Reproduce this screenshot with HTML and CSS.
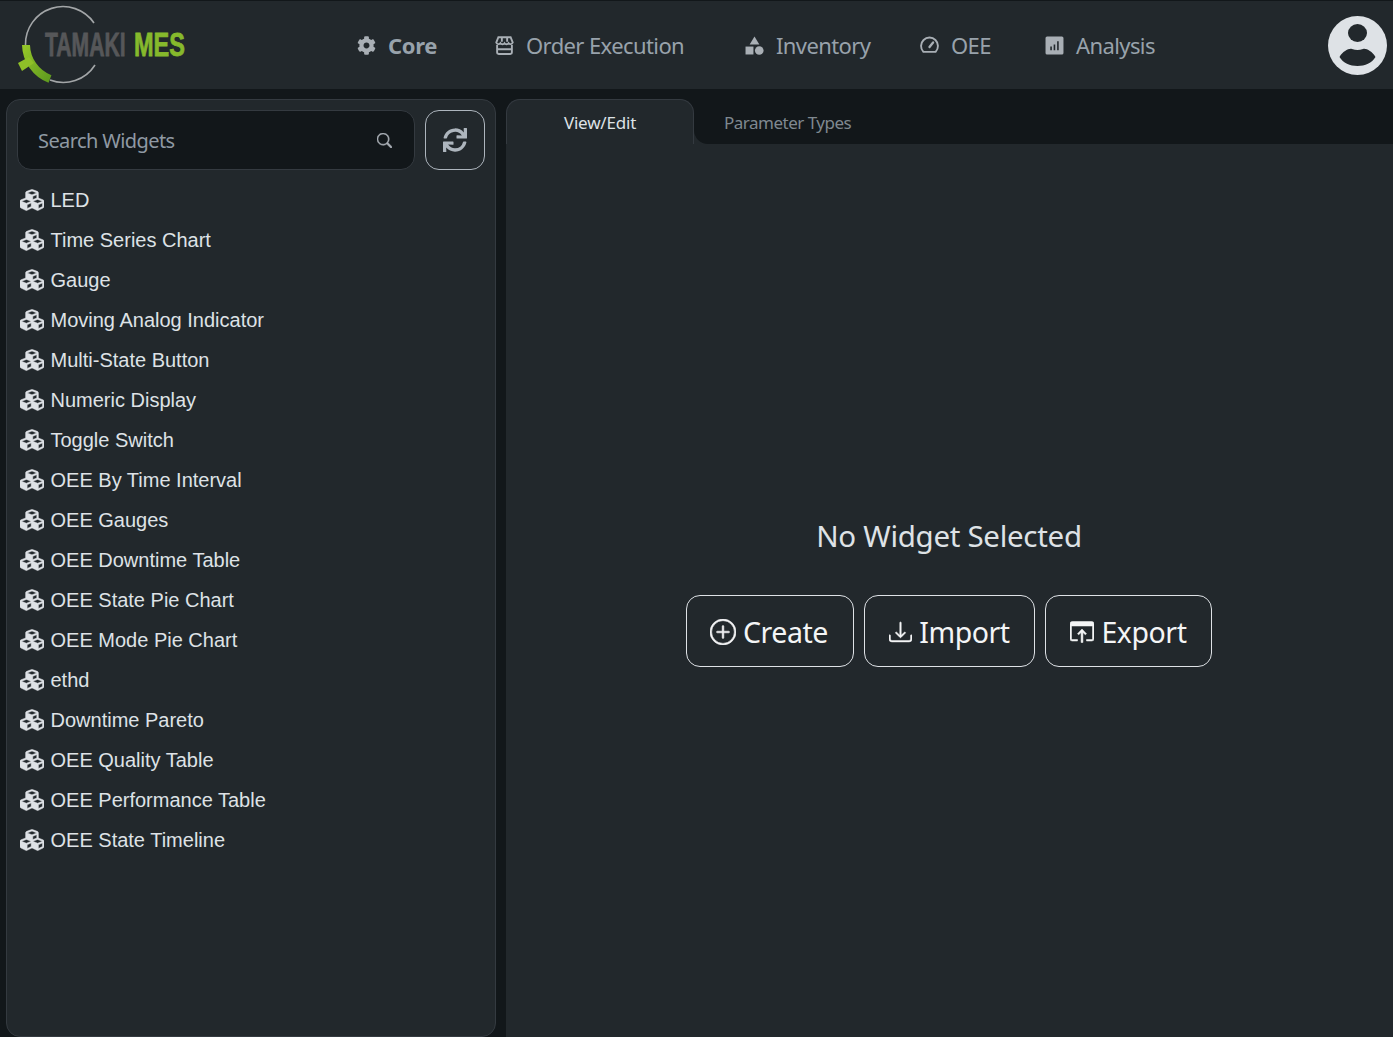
FILE: index.html
```html
<!DOCTYPE html>
<html lang="en">

<head>
  <meta charset="utf-8" />
  <title>Tamaki MES</title>
  <link rel="stylesheet" href="styles.css">
</head>

<body>
  <svg class="defs" width="0" height="0">
    <symbol id="cubes" viewBox="0 0 512 512">
      <path d="M488.6 250.2L392 214V105.5c0-15-9.3-28.4-23.4-33.7l-100-37.5c-8.1-3.1-17.1-3.1-25.3 0l-100 37.5c-14.1 5.3-23.4 18.7-23.4 33.7V214l-96.6 36.2C9.3 255.5 0 268.9 0 283.9V394c0 13.6 7.7 26.1 19.9 32.2l100 50c10.1 5.1 22.1 5.1 32.2 0l103.9-52 103.9 52c10.1 5.1 22.1 5.1 32.2 0l100-50c12.2-6.1 19.9-18.6 19.9-32.2V283.9c0-15-9.3-28.4-23.4-33.7zM358 214.8l-85 31.9v-68.2l85-37v73.3zM154 104.1l102-38.2 102 38.2v.6l-102 41.4-102-41.4v-.6zm84 291.1l-85 42.5v-79.1l85-38.8v75.4zm0-112l-102 41.4-102-41.4v-.6l102-38.2 102 38.2v.6zm240 112l-85 42.5v-79.1l85-38.8v75.4zm0-112l-102 41.4-102-41.4v-.6l102-38.2 102 38.2v.6z" />
    </symbol>
  </svg>

  <header class="topbar">
    <a class="logo">
      <svg width="200" height="88" viewBox="0 0 200 88">
        <defs>
          <linearGradient id="green" x1="0" y1="0" x2="1" y2="1">
            <stop offset="0" stop-color="#93c528" />
            <stop offset="1" stop-color="#5f9a1f" />
          </linearGradient>
        </defs>
        <path d="M94 22A37.500 37.500 0 0 0 25.500 44" fill="none" stroke="#a3a6a8" stroke-width="1.600" />
        <path d="M50 79A37.500 37.500 0 0 0 95 64" fill="none" stroke="#a3a6a8" stroke-width="1.600" />
        <path d="M26 44A37.500 37.500 0 0 0 50 78" fill="none" stroke="url(#green)" stroke-width="8" />
        <path d="M18 62L29 56L34 62L22 70Z" fill="#8fc028" />
        <text class="logo-gray" transform="translate(45 55) scale(.64 1)">TAMAKI</text>
        <text class="logo-green" transform="translate(134 55) scale(.713 1)">MES</text>
      </svg>
    </a>
    <nav class="nav">
      <a class="nav-item nav-active">
        <svg class="nav-icon" viewBox="0 0 512 512"><path d="M487.4 315.7l-42.6-24.6c4.3-23.2 4.3-47 0-70.2l42.6-24.6c4.9-2.8 7.1-8.6 5.5-14-11.1-35.6-30-67.8-54.7-94.6-3.8-4.1-10-5.1-14.8-2.3L380.8 110c-17.9-15.4-38.5-27.3-60.8-35.1V25.8c0-5.6-3.9-10.5-9.4-11.7-36.7-8.2-74.3-7.8-109.2 0-5.5 1.2-9.4 6.1-9.4 11.7V75c-22.2 7.9-42.8 19.8-60.8 35.1L88.7 85.5c-4.9-2.8-11-1.9-14.8 2.3-24.7 26.7-43.6 58.9-54.7 94.6-1.7 5.4.6 11.2 5.5 14L67.3 221c-4.3 23.2-4.3 47 0 70.2l-42.6 24.6c-4.9 2.8-7.1 8.6-5.5 14 11.1 35.6 30 67.8 54.7 94.6 3.8 4.1 10 5.1 14.8 2.3l42.6-24.6c17.9 15.4 38.5 27.3 60.8 35.1v49.2c0 5.6 3.9 10.5 9.4 11.7 36.7 8.2 74.3 7.8 109.2 0 5.5-1.2 9.4-6.1 9.4-11.7v-49.2c22.2-7.9 42.8-19.8 60.8-35.1l42.6 24.6c4.9 2.8 11 1.9 14.8-2.3 24.7-26.7 43.6-58.9 54.7-94.6 1.5-5.5-.7-11.3-5.6-14.1zM256 336c-44.1 0-80-35.9-80-80s35.9-80 80-80 80 35.9 80 80-35.9 80-80 80z" /></svg>
        Core
      </a>
      <a class="nav-item">
        <svg class="nav-icon nav-icon-line" viewBox="0 0 18 18"><path d="M3.200 1.200h11.600l2 5a2.300 2.300 0 0 1-4 .6 2.300 2.300 0 0 1-3.800 0 2.300 2.300 0 0 1-3.800 0 2.300 2.300 0 0 1-4-.6z" /><path d="M2 8.500v7a1.500 1.500 0 0 0 1.500 1.500h11a1.500 1.500 0 0 0 1.500-1.500v-7M2 12.500h14M6.500 1.500v4M11.500 1.500v4" /></svg>
        Order Execution
      </a>
      <a class="nav-item">
        <svg class="nav-icon" viewBox="0 0 18 18"><path d="M9 .5l4.600 7.500H4.400z" /><rect x=".5" y="10" width="7.500" height="7.500" /><circle cx="13.500" cy="13.700" r="4.100" /></svg>
        Inventory
      </a>
      <a class="nav-item">
        <svg class="nav-icon nav-icon-line" viewBox="0 0 18 18"><path d="M3.200 15A8 8 0 1 1 14.800 15z" stroke-linejoin="round" /><path d="M9 10.500l3.400-4.400" stroke-width="2.200" stroke-linecap="round" /></svg>
        OEE
      </a>
      <a class="nav-item">
        <svg class="nav-icon" viewBox="0 0 18 18"><path fill-rule="evenodd" d="M2 .5h14A1.500 1.500 0 0 1 17.500 2v14a1.500 1.500 0 0 1-1.500 1.500H2A1.500 1.500 0 0 1 .5 16V2A1.500 1.500 0 0 1 2 .5zM5 10v3.500h1.500V10zM8.200 8v5.500h1.500V8zM11.500 5v8.500H13V5z" /></svg>
        Analysis
      </a>
    </nav>
    <svg class="avatar" viewBox="0 0 59 59">
      <circle cx="29.500" cy="29.500" r="29.500" fill="#dee2e6" />
      <ellipse cx="29.500" cy="17" rx="9.500" ry="9" fill="#22282c" />
      <path d="M11.500 41C15 35 21 32 24 33c4 1.300 7 1.300 11 0 3-1 9 2 12.500 8C44 47 37 50 29.500 50S15 47 11.500 41z" fill="#22282c" />
    </svg>
  </header>

  <div class="page">
    <aside class="sidebar">
      <div class="search-row">
        <div class="search">
          <span>Search Widgets</span>
          <svg class="search-icon" viewBox="0 0 16 16"><path d="M11.742 10.344a6.500 6.500 0 1 0-1.397 1.398h-.001c.030.040.062.078.098.115l3.850 3.850a1 1 0 0 0 1.415-1.414l-3.850-3.850a1.007 1.007 0 0 0-.115-.100zM12 6.500a5.500 5.500 0 1 1-11 0 5.500 5.500 0 0 1 11 0z" /></svg>
        </div>
        <button class="refresh">
          <svg viewBox="0 0 512 512" width="24" height="24"><path d="M440.650 12.570l4 82.770A247.160 247.160 0 0 0 255.830 8C134.730 8 33.910 94.920 12.290 209.820A12 12 0 0 0 24.090 224h49.050a12 12 0 0 0 11.670-9.260 175.910 175.910 0 0 1 317-56.940l-101.460-4.860a12 12 0 0 0-12.570 12v47.410a12 12 0 0 0 12 12H500a12 12 0 0 0 12-12V12a12 12 0 0 0-12-12h-47.370a12 12 0 0 0-11.980 12.570zM255.830 432a175.610 175.610 0 0 1-146-77.800l101.800 4.870a12 12 0 0 0 12.570-12v-47.400a12 12 0 0 0-12-12H12a12 12 0 0 0-12 12V500a12 12 0 0 0 12 12h47.350a12 12 0 0 0 12-12.600l-4.150-82.570A247.170 247.170 0 0 0 255.830 504c121.110 0 221.930-86.920 243.550-201.820a12 12 0 0 0-11.800-14.180h-49.050a12 12 0 0 0-11.670 9.260A175.860 175.860 0 0 1 255.830 432z" /></svg>
        </button>
      </div>
      <ul class="widgets">
        <li><svg class="cube"><use href="#cubes" /></svg>LED</li>
        <li><svg class="cube"><use href="#cubes" /></svg>Time Series Chart</li>
        <li><svg class="cube"><use href="#cubes" /></svg>Gauge</li>
        <li><svg class="cube"><use href="#cubes" /></svg>Moving Analog Indicator</li>
        <li><svg class="cube"><use href="#cubes" /></svg>Multi-State Button</li>
        <li><svg class="cube"><use href="#cubes" /></svg>Numeric Display</li>
        <li><svg class="cube"><use href="#cubes" /></svg>Toggle Switch</li>
        <li><svg class="cube"><use href="#cubes" /></svg>OEE By Time Interval</li>
        <li><svg class="cube"><use href="#cubes" /></svg>OEE Gauges</li>
        <li><svg class="cube"><use href="#cubes" /></svg>OEE Downtime Table</li>
        <li><svg class="cube"><use href="#cubes" /></svg>OEE State Pie Chart</li>
        <li><svg class="cube"><use href="#cubes" /></svg>OEE Mode Pie Chart</li>
        <li><svg class="cube"><use href="#cubes" /></svg>ethd</li>
        <li><svg class="cube"><use href="#cubes" /></svg>Downtime Pareto</li>
        <li><svg class="cube"><use href="#cubes" /></svg>OEE Quality Table</li>
        <li><svg class="cube"><use href="#cubes" /></svg>OEE Performance Table</li>
        <li><svg class="cube"><use href="#cubes" /></svg>OEE State Timeline</li>
      </ul>
    </aside>

    <main class="main">
      <div class="tabs">
        <div class="tab tab-active">View/Edit</div>
        <div class="tab-rest">
          <div class="tab-other"><span>Parameter Types</span></div>
        </div>
      </div>
      <section class="panel">
        <h2 class="empty-title">No Widget Selected</h2>
        <div class="actions">
          <button class="action action-create">
            <svg viewBox="0 0 16 16" width="26" height="26"><path d="M8 15A7 7 0 1 1 8 1a7 7 0 0 1 0 14zm0 1A8 8 0 1 0 8 0a8 8 0 0 0 0 16z" /><path d="M8 4a.5.5 0 0 1 .5.5v3h3a.5.5 0 0 1 0 1h-3v3a.5.5 0 0 1-1 0v-3h-3a.5.5 0 0 1 0-1h3v-3A.5.5 0 0 1 8 4z" /></svg>
            Create
          </button>
          <button class="action action-import">
            <svg viewBox="0 0 16 16" width="23" height="24"><path d="M.5 9.900a.5.5 0 0 1 .5.5v2.500a1 1 0 0 0 1 1h12a1 1 0 0 0 1-1v-2.500a.5.5 0 0 1 1 0v2.500a2 2 0 0 1-2 2H2a2 2 0 0 1-2-2v-2.500a.5.5 0 0 1 .5-.5z" /><path d="M7.646 11.854a.5.5 0 0 0 .708 0l3-3a.5.5 0 0 0-.708-.708L8.500 10.293V1.500a.5.5 0 0 0-1 0v8.793L5.354 8.146a.5.5 0 1 0-.708.708l3 3z" /></svg>
            Import
          </button>
          <button class="action action-export">
            <svg viewBox="0 0 16 16" width="24" height="24"><path fill-rule="evenodd" d="M1.500 1h13A1.500 1.500 0 0 1 16 2.500v10a1.500 1.500 0 0 1-1.500 1.500H11v-1h3.500a.5.5 0 0 0 .5-.5V4H1v8.500a.5.5 0 0 0 .5.5H5v1H1.500A1.500 1.500 0 0 1 0 12.500v-10A1.500 1.500 0 0 1 1.500 1z" /><path d="M8 6l3 3.200-.8.7L8.600 8.300V15H7.400V8.300L5.800 9.900 5 9.200z" /></svg>
            Export
          </button>
        </div>
      </section>
    </main>
  </div>
</body>

</html>
```

FILE: styles.css
```css
* {
  box-sizing: border-box;
}

html,
body {
  height: 100%;
}

body {
  margin: 0;
  height: 1037px;
  overflow: hidden;
  display: flex;
  flex-direction: column;
  background: #12171a;
  color: #dee2e6;
  font-family: "Noto Sans", "Open Sans", sans-serif;
}

.defs {
  display: block;
  height: 0;
}

/* top bar */

.topbar {
  flex: none;
  display: flex;
  align-items: center;
  height: 89px;
  background: #22282c;
  border-top: 1px solid #12171a;
  padding-right: 6px;
}

.logo {
  flex: none;
  display: block;
  width: 357px;
  height: 88px;
}

.logo text {
  font-family: "Liberation Sans", sans-serif;
  font-weight: 700;
  font-size: 33px;
  stroke-width: 0.8px;
}

.logo-gray {
  fill: #565759;
  stroke: #565759;
}

.logo-green {
  fill: #86b92c;
  stroke: #86b92c;
}

.nav {
  display: grid;
  grid-template-columns: 138px 250px 175px 125px auto;
  flex: 1;
}

.nav-item {
  display: flex;
  align-items: center;
  gap: 12px;
  color: #98a2ab;
  font-size: 22px;
  letter-spacing: -0.6px;
  white-space: nowrap;
}

.nav-icon {
  width: 19px;
  height: 19px;
  fill: #a9afb5;
}

.nav-icon-line {
  fill: none;
  stroke: #a9afb5;
  stroke-width: 1.8;
}

.nav-active {
  font-weight: 700;
  letter-spacing: -0.3px;
}

.avatar {
  width: 59px;
  height: 59px;
  flex: none;
}

/* page */

.page {
  flex: 1;
  min-height: 0;
  display: flex;
  padding: 10px 0 0 6px;
  gap: 10px;
}

.sidebar {
  width: 490px;
  flex: none;
  background: #22282c;
  border: 1px solid #343a40;
  border-radius: 14px;
  padding: 10px 10px 0;
}

.search-row {
  display: flex;
  gap: 10px;
}

.search {
  flex: 1;
  height: 60px;
  display: flex;
  align-items: center;
  justify-content: space-between;
  padding: 0 22px 0 20px;
  background: #12171a;
  border: 1px solid #343a40;
  border-radius: 14px;
  color: #8f99a3;
  font-size: 20px;
  letter-spacing: -0.6px;
}

.search-icon {
  width: 15px;
  height: 15px;
  fill: #a9afb5;
  stroke: #a9afb5;
  stroke-width: 0.6;
}

.refresh {
  width: 60px;
  height: 60px;
  padding: 0;
  display: flex;
  align-items: center;
  justify-content: center;
  background: none;
  border: 1px solid #adb5bd;
  border-radius: 14px;
  fill: #adb5bd;
}

.widgets {
  list-style: none;
  margin: 10px 0 0;
  padding: 0 0 0 3px;
  font-family: "Liberation Sans", sans-serif;
  font-size: 20px;
}

.widgets li {
  display: flex;
  align-items: center;
  height: 40px;
  gap: 6.5px;
}

.cube {
  width: 24px;
  height: 24px;
  fill: #dee2e6;
  stroke: #dee2e6;
  stroke-width: 10;
}

/* main area */

.main {
  flex: 1;
  min-width: 0;
  display: flex;
  flex-direction: column;
}

.tabs {
  flex: none;
  display: flex;
  height: 45px;
}

.tab {
  width: 188px;
  flex: none;
  text-align: center;
  font-size: 17px;
  letter-spacing: -0.2px;
  padding-top: 11px;
}

.tab-active {
  background: #22282c;
  border: 1px solid #343a40;
  border-bottom: 0;
  border-radius: 14px 14px 0 0;
  color: #dee2e6;
}

.tab-rest {
  flex: 1;
  background: #22282c;
}

.tab-other {
  height: 100%;
  background: #12171a;
  border-bottom-left-radius: 14px;
  padding: 12px 0 0 30px;
  color: #7f8890;
  font-size: 17px;
  letter-spacing: -0.5px;
}

.panel {
  flex: 1;
  min-height: 0;
  display: flex;
  flex-direction: column;
  align-items: center;
  justify-content: center;
  padding-right: 1px;
  background: #22282c;
}

.empty-title {
  margin: 0 0 38px;
  font-size: 29.5px;
  font-weight: 400;
  letter-spacing: -0.3px;
  line-height: 42px;
}

.actions {
  display: flex;
  gap: 10px;
}

.action {
  height: 72px;
  display: flex;
  align-items: center;
  justify-content: center;
  gap: 7px;
  padding: 2px 0 0;
  background: none;
  border: 1px solid #dee2e6;
  border-radius: 14px;
  color: #f4f5f6;
  fill: #f4f5f6;
  stroke: #f4f5f6;
  stroke-width: 0;
  font-family: inherit;
  font-size: 28.5px;
  letter-spacing: -0.45px;
}

.action svg {
  stroke-width: 0.35;
}

.action-create {
  width: 168px;
  padding-right: 2px;
}

.action-import {
  width: 171px;
}

.action-export {
  width: 167px;
}
```
